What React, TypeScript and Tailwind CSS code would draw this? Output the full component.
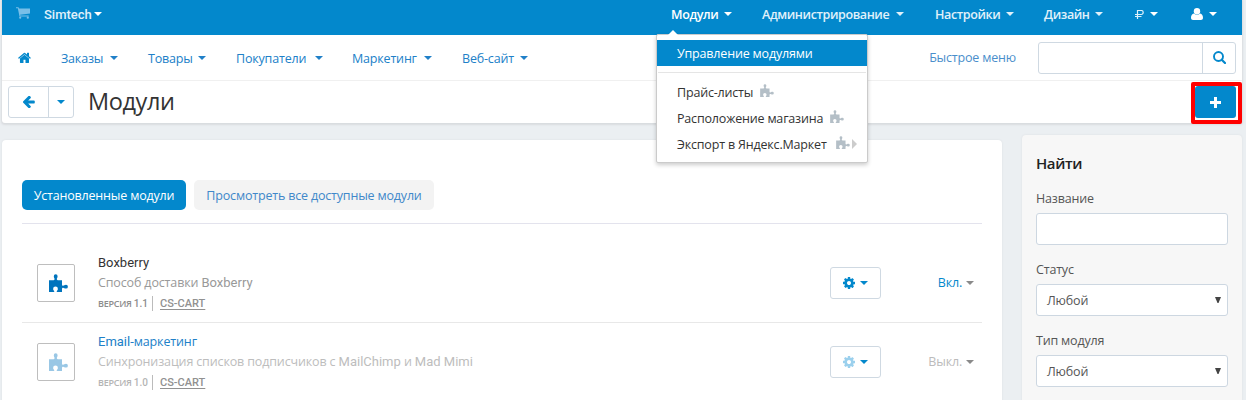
import React from "react";

const sans = "font-['Open_Sans','Noto_Sans',sans-serif]";
const body = "text-[12.5px] tracking-[-0.18px]";

function Caret({ className = "" }: { className?: string }) {
  return (
    <svg viewBox="0 0 8 4" className={"h-[4px] w-[8px] shrink-0 fill-current " + className}>
      <path d="M0 0h8L4 4z" />
    </svg>
  );
}

function Puzzle({ className = "" }: { className?: string }) {
  return (
    <svg viewBox="0 0 19 18" className={"shrink-0 fill-current " + className}>
      <path d="M0 6.200h3.600c1.400 0 2-.5 2-1.300 0-.6-.8-1.300-.8-2.700a1.900 1.900 0 0 1 3.800 0c0 1.400-.8 2.100-.8 2.700 0 .8.600 1.300 2 1.300H13v4.200c0 1 .5 1.400 1.200 1.400.7 0 1.400-1 2.800-1a1.900 1.900 0 0 1 0 3.800c-1.400 0-2.100-.9-2.800-.9s-1.200.4-1.200 1.300v3H8.300c-.6 0-.8-.6-.4-1.100.6-.6 1-1.200 1-1.900a2.400 2.400 0 0 0-4.800 0c0 .7.4 1.300 1 1.900.4.500.2 1.100-.4 1.100H0z" />
    </svg>
  );
}

function Cart() {
  return (
    <svg viewBox="0 0 14 12" className="h-[12px] w-[14px] fill-[#79bfe8]">
      <path d="M0 .3h2.500l.5 1.300h11v5L4.100 7.800l.2.8h8.400v1H3.500L1.800 1.300H0z" />
      <circle cx="4.200" cy="10.700" r="1.100" />
      <circle cx="11.800" cy="10.700" r="1.100" />
    </svg>
  );
}

function Home() {
  return (
    <svg viewBox="20 150 1630 1400" className="h-[11px] w-[13px] fill-current">
      <path d="M1408 992v480q0 26-19 45t-45 19H960v-384H704v384H320q-26 0-45-19t-19-45V992q0-1 .5-3t.5-3l575-474 575 474q1 2 1 6zm223-69l-62 74q-8 9-21 11h-3q-13 0-21-7L832 424l-692 577q-12 8-24 7-13-2-21-11l-62-74q-8-10-7-23.500t11-21.500l719-599q32-26 76-26t76 26l244 204V288q0-14 9-23t23-9h192q14 0 23 9t9 23v408l219 182q10 8 11 21.500t-7 23.500z" />
    </svg>
  );
}

function ArrowLeft() {
  return (
    <svg viewBox="64 180 1500 1430" className="h-[12px] w-[12px] fill-current">
      <path d="M1536 832v128q0 53-32.500 90.500T1419 1088H715l293 294q38 36 38 90t-38 90l-75 76q-37 37-90 37-52 0-91-37l-651-652q-37-37-37-90 0-52 37-91l651-650q38-38 91-38 52 0 90 38l75 74q38 38 38 91t-38 91L715 704h704q52 0 84.500 37.500T1536 832z" />
    </svg>
  );
}

function Search() {
  return (
    <svg viewBox="0 0 13 13" className="h-[13px] w-[13px] fill-none stroke-current">
      <circle cx="5.500" cy="5.500" r="4.500" strokeWidth="1.900" />
      <path d="M8.700 8.700l3.300 3.300" strokeWidth="2.200" strokeLinecap="round" />
    </svg>
  );
}

function User() {
  return (
    <svg viewBox="0 0 12 12" className="h-[12px] w-[12px] fill-white">
      <circle cx="6" cy="3.200" r="3.200" />
      <path d="M2.900 5.400C1 5.800 0 7.600 0 9.800 0 11.200.9 12 2 12h8c1.100 0 2-.8 2-2.200 0-2.200-1-4-2.900-4.400a4.500 4.500 0 0 1-6.200 0z" />
    </svg>
  );
}

function Gear({ className = "" }: { className?: string }) {
  return (
    <svg viewBox="0 0 1536 1536" className={"h-[12px] w-[12px] fill-current " + className}>
      <path d="M1024 768q0-106-75-181t-181-75-181 75-75 181 75 181 181 75 181-75 75-181zm512-109v222q0 12-8 23t-20 13l-185 28q-19 54-39 91 35 50 107 138 10 12 10 25t-9 23q-27 37-99 108t-94 71q-12 0-26-9l-138-108q-44 23-91 38-16 136-29 186-7 28-36 28H657q-14 0-24.500-8.500T621 1506l-28-184q-49-16-90-37l-141 107q-10 9-25 9-14 0-25-11-126-114-165-168-7-10-7-23 0-12 8-23 15-21 51-66.500t54-70.500q-27-50-41-99L29 913q-13-2-21-12.500T0 877V655q0-12 8-23t19-13l186-28q14-46 39-92-40-57-107-138-10-12-10-24 0-10 9-23 26-36 98.500-107.500T337 135q13 0 26 10l138 107q44-23 91-38 16-136 29-186 7-28 36-28h222q14 0 24.500 8.500T915 30l28 184q49 16 90 37l142-107q9-9 24-9 13 0 25 10 129 119 165 170 7 8 7 22 0 12-8 23-15 21-51 66.500t-54 70.500q26 50 41 98l183 28q13 2 21 12.500t8 23.500z" />
    </svg>
  );
}

function TopItem({ label, className }: { label: string; className: string }) {
  return (
    <div className={"flex h-[18px] shrink-0 items-center justify-between text-[12.5px] leading-[18px] font-semibold tracking-[-0.38px] " + className}>
      <span className="pt-[2px]">{label}</span>
      <Caret className="mb-[1px]" />
    </div>
  );
}

function NavItem({ label, className }: { label: string; className: string }) {
  return (
    <div className={"flex h-[18px] shrink-0 items-center justify-between leading-[18px] " + body + " " + className}>
      <span className="pt-[2px]">{label}</span>
      <Caret />
    </div>
  );
}

function MenuRow({ label, width, arrow }: { label: string; width: string; arrow?: boolean }) {
  return (
    <div className={"flex h-[26px] items-center pl-[20px] whitespace-nowrap text-[#333] " + body}>
      <span className={"shrink-0 pt-[2px] " + width}>{label}</span>
      <Puzzle className="mb-[3px] h-[13px] w-[14px] text-[#b4bfc7]" />
      {arrow && (
        <svg viewBox="0 0 5 10" className="ml-[2px] h-[10px] w-[5px] fill-[#ccc]">
          <path d="M0 0l5 5-5 5z" />
        </svg>
      )}
    </div>
  );
}

type Addon = {
  name: React.ReactNode;
  description: React.ReactNode;
  version: string;
  status: string;
  active: boolean;
};

const roboto = "font-[Roboto,sans-serif]";
const latin = "font-[Roboto,sans-serif] text-[13px] tracking-normal";

const addons: Addon[] = [
  {
    name: <span className={latin}>Boxberry</span>,
    description: <>Способ доставки <span className={latin}>Boxberry</span></>,
    version: "1.1",
    status: "Вкл.",
    active: true,
  },
  {
    name: <><span className={latin}>Email-</span>маркетинг</>,
    description: <>Синхронизация списков подписчиков с <span className={latin}>MailChimp</span> и <span className={latin}>Mad Mimi</span></>,
    version: "1.0",
    status: "Выкл.",
    active: false,
  },
];

function AddonRow({ addon }: { addon: Addon }) {
  const on = addon.active;
  return (
    <div className="flex h-[79px] shrink-0 border-t border-[#e8e8e8] first:border-transparent">
      <div className="mt-[20px] ml-[15px] flex size-[38px] shrink-0 items-center justify-center rounded-[2px] border border-[#bebebe]">
        <Puzzle className={"ml-[4px] h-[18px] w-[19px] " + (on ? "text-[#0074bd]" : "text-[#99c7e5]")} />
      </div>
      <div className="ml-[23px] flex w-[732px] shrink-0 flex-col pt-[9px] text-[12.5px] tracking-[-0.14px]">
        <div className={"h-[20px] leading-[20px] " + (on ? "text-[#333]" : "text-[#2080c8]")}>{addon.name}</div>
        <div className={"h-[20px] leading-[20px] " + (on ? "text-[#999]" : "text-[#bdbdbd]")}>{addon.description}</div>
        <div className="mt-[2px] flex h-[16px] items-center">
          <span className={"w-[54px] text-[9px] font-semibold tracking-[-0.25px] whitespace-nowrap " + (on ? "text-[#8c8c8c]" : "text-[#b4b4b4]")}>
            ВЕРСИЯ <span className={roboto + " text-[10px] font-medium tracking-normal"}>{addon.version}</span>
          </span>
          <span className="h-[15px] w-px bg-[#bbb]" />
          <span className={roboto + " ml-[7px] pt-[2px] text-[11px] font-medium tracking-normal text-[#919191] underline underline-offset-2"}>CS-CART</span>
        </div>
      </div>
      <div className="mt-[23px] flex h-[32px] w-[51px] shrink-0 items-center justify-center gap-[5px] rounded-[3px] border border-[#cfd9e2] text-[#0388cc]">
        <Gear className={on ? "" : "text-[#9bd0ed]"} />
        <Caret />
      </div>
      <div className={"mt-[29px] flex h-[20px] flex-1 items-center justify-end gap-[4px] pr-[8px] " + body}>
        <span className={on ? "text-[#0388cc]" : "text-[#bbb]"}>{addon.status}</span>
        <Caret className="mb-[1px] text-[#8a8a8a]" />
      </div>
    </div>
  );
}

function Field({ label, value }: { label: string; value?: string }) {
  return (
    <div className="mb-[15px] shrink-0">
      <div className={"h-[24px] pt-[1px] leading-[18px] text-[#555] " + body}>{label}</div>
      <div className={"flex h-[32px] items-center justify-between rounded-[3px] border border-[#cdd7e1] bg-white pr-[6px] pl-[10px] text-[#555] " + body}>
        <span className="pt-[3px]">{value}</span>
        {value && (
          <svg viewBox="0 0 6 6" className="mb-[1px] h-[6px] w-[6px] fill-[#444]">
            <path d="M0 0h6L3.500 6h-1z" />
          </svg>
        )}
      </div>
    </div>
  );
}

export default function App() {
  return (
    <div className={"relative h-[400px] w-[1246px] overflow-hidden bg-[#ebeff2] pl-[2px] " + sans}>
      <header className="flex h-[123px] w-[1240px] flex-col rounded-b-[3px] bg-white shadow-[0_1px_2px_1px_#d9dcdf]">
        <div className="flex h-[35px] shrink-0 items-start bg-[#0388cc] pt-[5px] text-[#e0f1fa]">
          <div className="mt-[2px] ml-[14px] w-[28px]"><Cart /></div>
          <div className="flex w-[58px] items-center justify-between text-[13px] leading-[18px] font-medium">
            <span className={roboto + " pt-[1px]"}>Simtech</span>
            <Caret className="mb-[1px] text-white" />
          </div>
          <TopItem label="Модули" className="ml-[569px] w-[61px] text-white" />
          <TopItem label="Администрирование" className="ml-[30px] w-[142px]" />
          <TopItem label="Настройки" className="ml-[31px] w-[79px]" />
          <TopItem label="Дизайн" className="ml-[30px] w-[59px]" />
          <div className="ml-[32px] flex h-[18px] w-[23px] items-center justify-between">
            <svg viewBox="0 0 9 9" className="h-[9px] w-[9px] fill-none stroke-current">
              <path strokeWidth="1.200" d="M2.500 9V.5h3.700a2 2 0 0 1 2 2v0a2 2 0 0 1-2 2H0M0 6.500h6.500" />
            </svg>
            <Caret className="mb-[1px] text-white" />
          </div>
          <div className="ml-[33px] flex h-[18px] w-[26px] items-center justify-between">
            <User />
            <Caret className="mb-[1px] text-white" />
          </div>
        </div>
        <nav className="flex h-[46px] shrink-0 items-center border-b border-[#f0f0f0] text-[#2080c8]">
          <div className="ml-[16px] w-[43px] text-[#0388cc]"><Home /></div>
          <NavItem label="Заказы" className="w-[57px]" />
          <NavItem label="Товары" className="ml-[30px] w-[58px]" />
          <NavItem label="Покупатели" className="ml-[30px] w-[87px]" />
          <NavItem label="Маркетинг" className="ml-[29px] w-[80px]" />
          <NavItem label="Веб-сайт" className="ml-[30px] w-[66px]" />
          <div className={"ml-auto pt-[2px] text-[#4a8ecb] " + body}>Быстрое меню</div>
          <div className="mr-[6px] ml-[22px] flex h-[32px] w-[198px] rounded-[3px] border border-[#cfd9e2]">
            <div className="flex-1" />
            <div className="flex w-[33px] items-center justify-center border-l border-[#cfd9e2] text-[#0388cc]"><Search /></div>
          </div>
        </nav>
        <div className="flex h-[42px] shrink-0 items-center pb-px">
          <div className="ml-[6px] flex h-[32px] w-[66px] rounded-[3px] border border-[#cfd9e2] text-[#0388cc]">
            <div className="flex w-[40px] items-center justify-center border-r border-[#cfd9e2]"><ArrowLeft /></div>
            <div className="flex flex-1 items-center justify-center"><Caret /></div>
          </div>
          <h1 className="mb-[2px] ml-[14px] text-[23.5px] leading-[32px] tracking-[-0.4px] text-[#333]">Модули</h1>
        </div>
      </header>

      <div className="flex">
        <main className="mt-[17px] flex h-[270px] w-[1000px] shrink-0 flex-col rounded-t-[4px] bg-white px-[20px] shadow-[0_0_2px_#d8dde1]">
          <div className={"mt-[40px] flex h-[44px] shrink-0 gap-[8px] border-b border-[#e3e3ed] " + body}>
            <div className="flex h-[30px] w-[164px] items-center justify-center rounded-[5px] bg-[#0388cc] pt-[2px] text-white">Установленные модули</div>
            <div className="flex h-[30px] w-[240px] items-center justify-center rounded-[5px] bg-[#f3f3f3] pt-[2px] text-[#4088ca]">Просмотреть все доступные модули</div>
          </div>
          <div className="mt-[19px] flex flex-col">
            {addons.map((addon) => <AddonRow key={addon.version} addon={addon} />)}
          </div>
        </main>
        <aside className="mt-[12px] ml-[20px] flex h-[275px] w-[220px] shrink-0 flex-col rounded-t-[4px] bg-[#f7f7f7] px-[14px] shadow-[0_0_2px_#d8dde1]">
          <h2 className="mt-[18px] mb-[15px] h-[21px] text-[15px] leading-[21px] font-semibold tracking-[-0.4px] text-[#222]">Найти</h2>
          <Field label="Название" />
          <Field label="Статус" value="Любой" />
          <Field label="Тип модуля" value="Любой" />
        </aside>
      </div>

      <div className="absolute top-[82px] left-[1191px] flex h-[42px] w-[51px] items-start justify-start rounded-[2px] border-4 border-[#f00] bg-white">
        <div className="flex h-[32px] w-[41px] items-center justify-center rounded-[3px] bg-[#0388cc]">
          <svg viewBox="0 0 11 11" className="h-[11px] w-[11px] fill-white">
            <path d="M4 0h3v4h4v3H7v4H4V7H0V4h4z" />
          </svg>
        </div>
      </div>

      <div className="absolute top-[34px] left-[656px] h-[129px] w-[212px] rounded-[2px] border border-[#cbcbcb] bg-white pt-[5px] shadow-[0_2px_4px_rgba(0,0,0,0.2)]">
        <svg viewBox="0 0 10 5" className="absolute top-[-5px] left-[11px] h-[5px] w-[10px] fill-white">
          <path d="M0 5l5-5 5 5z" />
        </svg>
        <div className={"flex h-[26px] items-center bg-[#0388cc] pt-[2px] pl-[20px] text-white " + body}>Управление модулями</div>
        <div className="mx-px mt-[6px] mb-[6px] h-px bg-[#e5e5e5]" />
        <MenuRow label="Прайс-листы" width="w-[83px]" />
        <MenuRow label="Расположение магазина" width="w-[153px]" />
        <MenuRow label="Экспорт в Яндекс.Маркет" width="w-[159px]" arrow />
      </div>
    </div>
  );
}
